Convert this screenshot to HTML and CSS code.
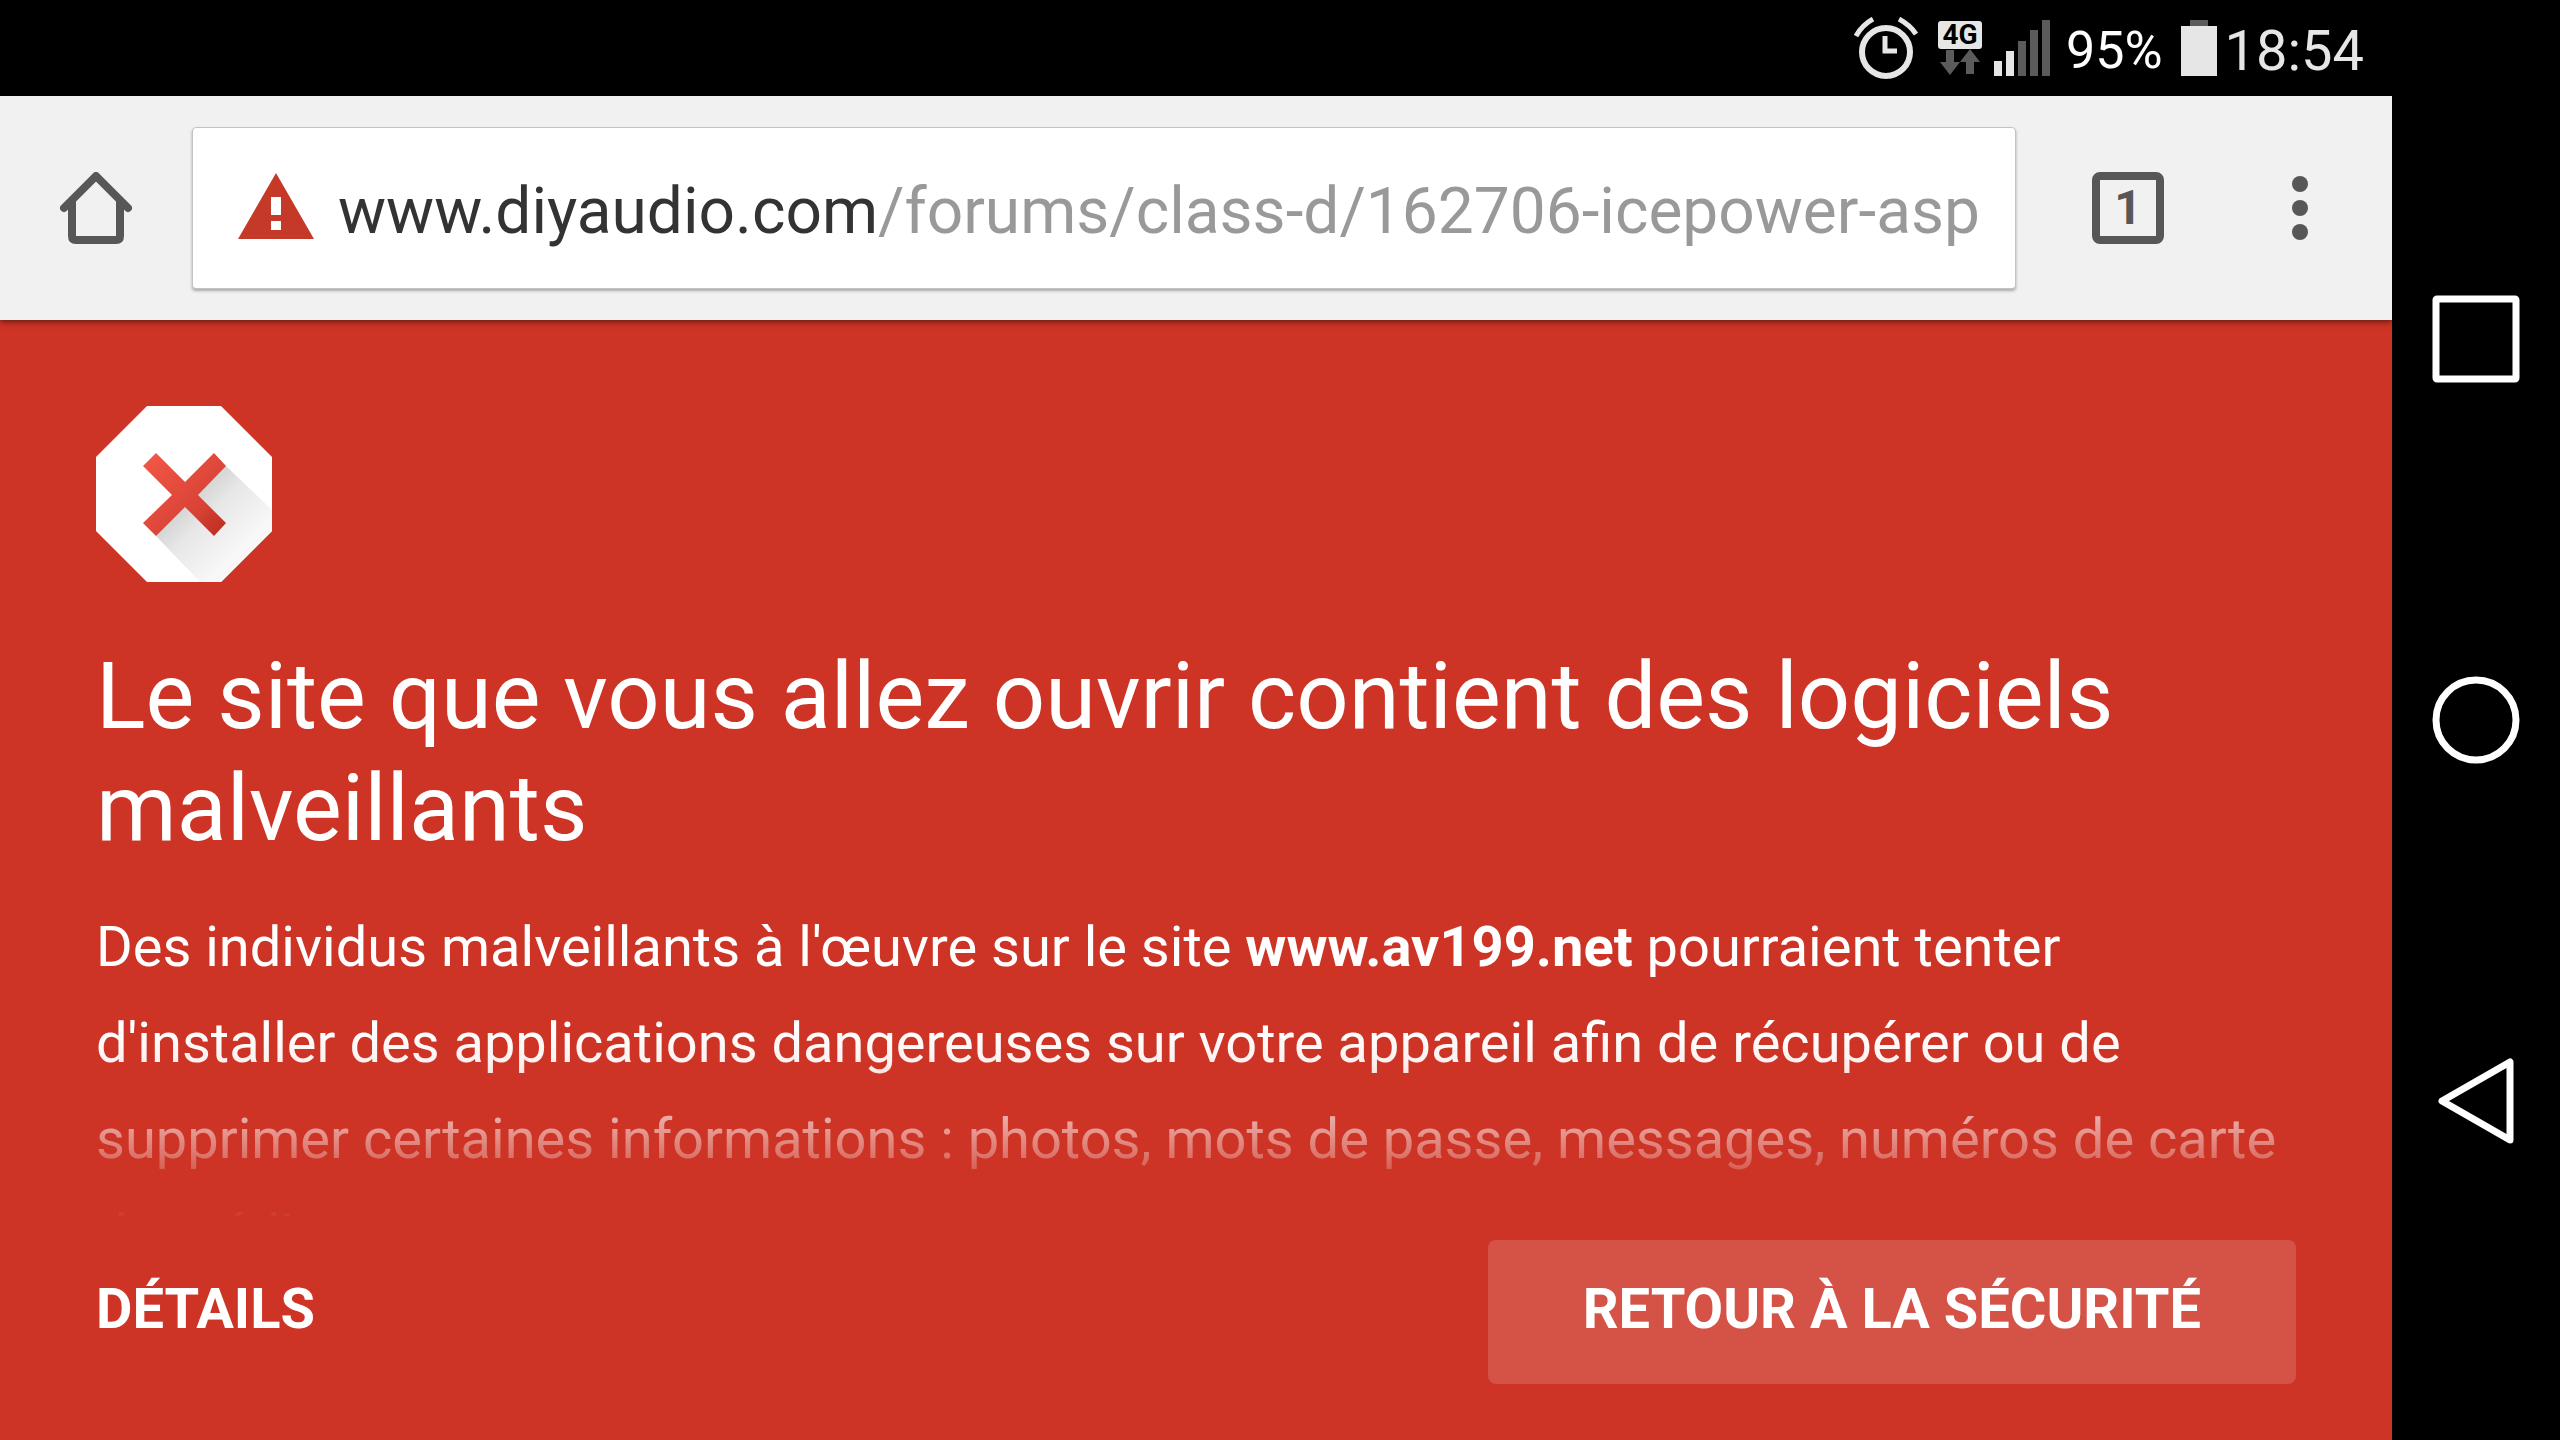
FILE: index.html
```html
<!DOCTYPE html>
<html lang="fr">
  <head>
    <meta charset="utf-8">
    <title>Erreur de sécurité</title>
    <link rel="stylesheet" href="styles.css">
  </head>
  <body>
  <div class="screen">
    <header class="status-bar">
      <svg class="alarm-icon" viewBox="0 0 64 62" aria-hidden="true">
        <circle cx="32" cy="35" r="24" fill="none" stroke="#e6e6e6" stroke-width="6"/>
        <path d="M31 19v15h12" fill="none" stroke="#e6e6e6" stroke-width="5"/>
        <path d="M2 19Q8 8 19 2M45 2Q56 8 62 17" fill="none" stroke="#e6e6e6" stroke-width="5"/>
      </svg>
      <div class="network">
        <span class="network-type">4G</span>
        <svg class="network-arrows" viewBox="0 0 40 26" aria-hidden="true">
          <path d="M6 1h8v12h6L10 26 0 13h6zM26 25h8V13h6L30 0 20 13h6z" fill="#5b5b5b"/>
        </svg>
      </div>
      <svg class="signal-icon" viewBox="0 0 56 56" aria-hidden="true">
        <path d="M0 41h8v15H0zM12 31h8v25h-8z" fill="#e6e6e6"/>
        <path d="M24 21h8v35h-8zM36 10h8v46h-8zM48 0h8v56h-8z" fill="#5b5b5b"/>
      </svg>
      <span class="battery-level">95%</span>
      <svg class="battery-icon" viewBox="0 0 36 56" aria-hidden="true">
        <path d="M9 0h18v6H9z" fill="#5b5b5b"/>
        <path d="M0 6h36v50H0z" fill="#e6e6e6"/>
      </svg>
      <span class="clock">18:54</span>
    </header>

    <div class="toolbar">
      <button class="tool-button" type="button" aria-label="Accueil">
        <svg class="tool-icon" viewBox="0 0 72 72">
          <path d="M4 36L36 4l32 32M12 29v35q0 4 4 4h40q4 0 4-4V29" fill="none" stroke="#575757" stroke-width="8" stroke-linecap="round" stroke-linejoin="round"/>
        </svg>
      </button>
      <div class="address-bar">
        <svg class="warning-icon" viewBox="0 0 76 66" aria-hidden="true">
          <path d="M38 0l38 66H0z" fill="#c53929"/>
          <path d="M33 24h10v18H33zM33 48h10v9H33z" fill="#fff"/>
        </svg>
        <a class="url" href="#">www.diyaudio.com<span class="url-path">/forums/class-d/162706-icepower-asp</span></a>
      </div>
      <button class="tab-button" type="button" aria-label="Onglets"><span class="tab-count">1</span></button>
      <button class="tool-button" type="button" aria-label="Menu">
        <svg class="tool-icon" viewBox="0 0 72 72">
          <g fill="#575757">
            <circle cx="36" cy="12" r="8"/>
            <circle cx="36" cy="36" r="8"/>
            <circle cx="36" cy="60" r="8"/>
          </g>
        </svg>
      </button>
    </div>

    <main class="warning">
      <div class="warning-content">
        <svg class="stop-icon" viewBox="0 0 176 176" aria-hidden="true">
          <defs>
            <linearGradient id="cross" gradientUnits="userSpaceOnUse" x1="54" y1="54" x2="124" y2="124">
              <stop offset="0" stop-color="#f05545"/>
              <stop offset=".7" stop-color="#d84336"/>
              <stop offset="1" stop-color="#c03022"/>
            </linearGradient>
            <linearGradient id="shadow" gradientUnits="userSpaceOnUse" x1="95" y1="95" x2="145" y2="145">
              <stop offset="0" stop-color="#d6d6d6"/>
              <stop offset=".35" stop-color="#e8e8e8"/>
              <stop offset="1" stop-color="#f8f8f8"/>
            </linearGradient>
          </defs>
          <path d="M51 0h74l51 51v74l-51 51H51L0 125V51z" fill="#fff"/>
          <path d="M130 60l46 44v21l-51 51h-21L60 130l28-42z" fill="url(#shadow)"/>
          <path d="M60 47l29 29 29-29 12 13-28 29 28 28-12 13-29-29-29 29-13-13 29-28-29-29z" fill="url(#cross)"/>
        </svg>
        <h1>Le site que vous allez ouvrir contient des logiciels malveillants</h1>
        <p>Des individus malveillants à l'œuvre sur le site <strong>www.av199.net</strong> pourraient tenter d'installer des applications dangereuses sur votre appareil afin de récupérer ou de supprimer certaines informations : photos, mots de passe, messages, numéros de carte de crédit.</p>
      </div>
      <div class="actions">
        <button class="details-button" type="button">DÉTAILS</button>
        <button class="safety-button" type="button">RETOUR À LA SÉCURITÉ</button>
      </div>
    </main>
  </div>

  <nav class="nav-bar">
    <button type="button" aria-label="Applications récentes">
      <svg class="nav-icon" viewBox="0 0 88 88">
        <rect x="4" y="4" width="80" height="80" rx="1"/>
      </svg>
    </button>
    <button type="button" aria-label="Écran d'accueil">
      <svg class="nav-icon" viewBox="0 0 88 88">
        <circle cx="44" cy="44" r="40"/>
      </svg>
    </button>
    <button type="button" aria-label="Retour">
      <svg class="nav-icon" viewBox="0 0 88 88">
        <path d="M78 5v78L10 44z"/>
      </svg>
    </button>
  </nav>
  </body>
</html>
```
FILE: styles.css
```css
* {
  box-sizing: border-box;
}

body {
  margin: 0;
  height: 100vh;
  display: grid;
  grid-template-columns: 1fr 168px;
  background-color: #000;
  font-family: Roboto, sans-serif;
}

button {
  padding: 0;
  border: none;
  background: none;
  color: inherit;
  font-family: inherit;
  cursor: pointer;
}

svg {
  display: block;
  flex: none;
}

.screen {
  display: flex;
  flex-direction: column;
  height: 100vh;
  min-width: 0;
}

/* status bar */
.status-bar {
  display: flex;
  justify-content: flex-end;
  align-items: center;
  height: 96px;
  padding-right: 28px;
  color: #e6e6e6;
}

.alarm-icon {
  width: 64px;
  height: 62px;
}

.network {
  display: flex;
  flex-direction: column;
  align-items: center;
  margin: 0 12px 0 20px;
}

.network-type {
  width: 44px;
  border-radius: 3px;
  background-color: #e6e6e6;
  color: #000;
  font-size: 28px;
  font-weight: bold;
  line-height: 28px;
  text-align: center;
}

.network-arrows {
  width: 40px;
  height: 26px;
}

.signal-icon {
  width: 56px;
  height: 56px;
}

.battery-level,
.clock {
  padding-top: 5px;
  line-height: 64px;
}

.battery-level {
  margin: 0 18px 0 16px;
  color: #fff;
  font-size: 52px;
}

.battery-icon {
  width: 36px;
  height: 56px;
}

.clock {
  margin-left: 8px;
  font-size: 56px;
}

/* browser toolbar */
.toolbar {
  position: relative;
  display: flex;
  align-items: center;
  height: 224px;
  padding: 0 52px 0 56px;
  background-color: #f1f1f1;
  box-shadow: 0 2px 6px rgba(0, 0, 0, 0.5);
}

.tool-button {
  width: 80px;
  height: 80px;
}

.tool-icon {
  width: 72px;
  height: 72px;
  margin: auto;
}

.address-bar {
  flex: 1;
  display: flex;
  align-items: center;
  gap: 24px;
  min-width: 0;
  height: 162px;
  margin: 0 76px 0 56px;
  padding: 0 28px 0 45px;
  border: 1px solid #c4c4c4;
  border-radius: 4px;
  background-color: #fff;
  box-shadow: 0 2px 3px rgba(0, 0, 0, 0.3);
}

.warning-icon {
  width: 76px;
  height: 66px;
  margin-bottom: 4px;
}

.url {
  padding-top: 8px;
  color: #333;
  font-size: 64px;
  line-height: 80px;
  white-space: nowrap;
  text-decoration: none;
}

.url-path {
  color: #999;
}

.tab-button {
  width: 72px;
  height: 72px;
  margin-right: 96px;
  border: 8px solid #575757;
  border-radius: 8px;
  color: #575757;
  font-size: 48px;
  font-weight: bold;
  line-height: 56px;
}

/* warning page */
.warning {
  flex: 1;
  display: flex;
  flex-direction: column;
  min-height: 0;
  padding: 86px 96px 56px;
  background-color: #cd3426;
  color: #fff;
}

/* long text fades out above the buttons */
.warning-content {
  flex: 1;
  min-height: 0;
  overflow: hidden;
  -webkit-mask-image: linear-gradient(to top, rgba(0, 0, 0, 0.05), rgba(0, 0, 0, 0.2) 44px, rgba(0, 0, 0, 0.6) 100px, rgba(0, 0, 0, 0.92) 152px, #000 184px);
  mask-image: linear-gradient(to top, rgba(0, 0, 0, 0.05), rgba(0, 0, 0, 0.2) 44px, rgba(0, 0, 0, 0.6) 100px, rgba(0, 0, 0, 0.92) 152px, #000 184px);
}

.stop-icon {
  width: 176px;
  height: 176px;
}

h1 {
  margin: 59px 0 34px;
  font-size: 92px;
  font-weight: normal;
  line-height: 112px;
}

p {
  margin: 0;
  font-size: 56px;
  line-height: 96px;
}

.actions {
  display: flex;
  justify-content: space-between;
  margin-top: 24px;
}

.details-button,
.safety-button {
  height: 144px;
  padding-bottom: 6px;
  font-size: 56px;
  font-weight: bold;
}

.safety-button {
  padding-left: 95px;
  padding-right: 95px;
  border-radius: 8px;
  background-color: rgba(255, 255, 255, 0.15);
}

/* system navigation */
.nav-bar {
  display: flex;
  flex-direction: column;
  justify-content: center;
  align-items: center;
  gap: 293px;
}

.nav-icon {
  width: 88px;
  height: 88px;
  fill: none;
  stroke: #fff;
  stroke-width: 7px;
  stroke-linejoin: round;
}
```
